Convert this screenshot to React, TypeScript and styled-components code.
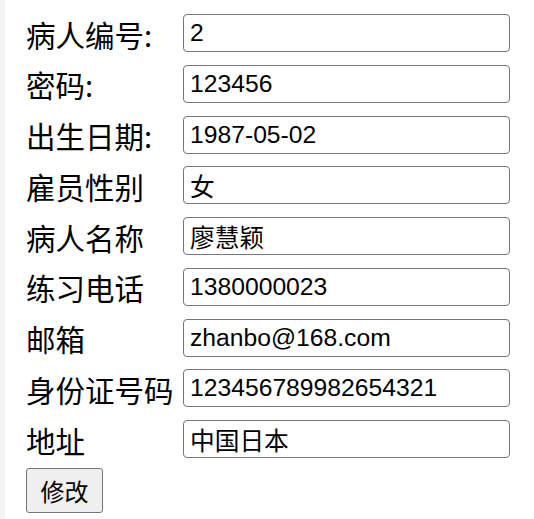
import React from 'react';
import styled, { createGlobalStyle } from 'styled-components';

const GlobalStyle = createGlobalStyle`
  html, body {
    margin: 0;
    padding: 0;
    background: #ffffff;
  }
`;

const Page = styled.div`
  min-height: 519px;
  box-sizing: border-box;
  border-left: 5px solid #f4f4f4;
  padding: 14px 0 0 21px;
  font-family: 'Microsoft YaHei', 'Noto Sans CJK SC', sans-serif;
`;

const Form = styled.form`
  display: grid;
  grid-template-columns: 157px 327px;
  grid-auto-rows: 38px;
  row-gap: 12.75px;
  align-items: center;
`;

const Label = styled.label`
  font-size: 29.5px;
  line-height: 30px;
  color: #000000;
  white-space: nowrap;
  padding-top: 1px;
`;

const Field = styled.input`
  box-sizing: border-box;
  width: 327px;
  height: 38px;
  margin: 0;
  padding: 0 6px;
  border: 1px solid #767676;
  border-radius: 4px;
  font-family: 'Liberation Sans', 'Noto Sans CJK SC', sans-serif;
  font-size: 24.7px;
  color: #000000;
  background: #ffffff;
  outline: none;
`;

const SubmitButton = styled.button`
  margin-top: 10px;
  width: 77px;
  height: 45px;
  padding: 0;
  border: 1px solid #767676;
  border-radius: 3px;
  background: #efefef;
  font-family: 'Microsoft YaHei', 'Noto Sans CJK SC', sans-serif;
  font-size: 24px;
  color: #000000;
  cursor: pointer;
`;

const rows = [
  { label: '病人编号:', value: '2' },
  { label: '密码:', value: '123456' },
  { label: '出生日期:', value: '1987-05-02' },
  { label: '雇员性别', value: '女' },
  { label: '病人名称', value: '廖慧颖' },
  { label: '练习电话', value: '1380000023' },
  { label: '邮箱', value: 'zhanbo@168.com' },
  { label: '身份证号码', value: '123456789982654321' },
  { label: '地址', value: '中国日本' },
];

const App: React.FC = () => {
  return (
    <>
      <GlobalStyle />
      <Page>
        <Form onSubmit={(e) => e.preventDefault()}>
          {rows.map((r) => (
            <React.Fragment key={r.label}>
              <Label>{r.label}</Label>
              <Field type="text" defaultValue={r.value} />
            </React.Fragment>
          ))}
        </Form>
        <SubmitButton type="button">修改</SubmitButton>
      </Page>
    </>
  );
};

export default App;
